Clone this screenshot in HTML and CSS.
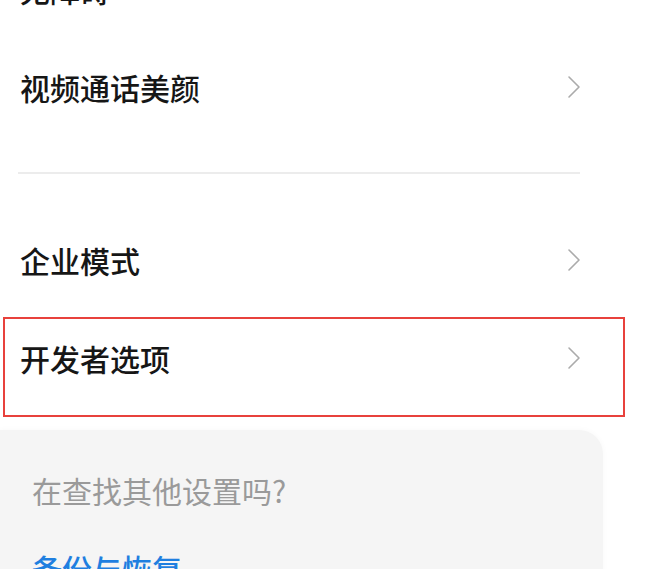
FILE: index.html
```html
<!DOCTYPE html>
<html lang="zh-CN">
<head>
    <meta charset="UTF-8">
    <meta name="viewport" content="width=device-width, initial-scale=1.0">
    <title>设置</title>
    <link rel="stylesheet" href="styles.css">
</head>
<body>
    <section class="settings-group first-group">
        <a class="setting-row" href="#">
            <span class="row-title">无障碍</span>
            <svg class="chevron" viewBox="0 0 14 24"><polyline points="2,2 12,12 2,22"/></svg>
        </a>
        <a class="setting-row" href="#">
            <span class="row-title">视频通话美颜</span>
            <svg class="chevron" viewBox="0 0 14 24"><polyline points="2,2 12,12 2,22"/></svg>
        </a>
    </section>

    <div class="divider"></div>

    <section class="settings-group">
        <a class="setting-row" href="#">
            <span class="row-title">企业模式</span>
            <svg class="chevron" viewBox="0 0 14 24"><polyline points="2,2 12,12 2,22"/></svg>
        </a>
        <a class="setting-row highlighted" href="#">
            <span class="row-title">开发者选项</span>
            <svg class="chevron" viewBox="0 0 14 24"><polyline points="2,2 12,12 2,22"/></svg>
            <span class="mark-box"></span>
        </a>
    </section>

    <section class="suggest-card">
        <p class="suggest-title">在查找其他设置吗?</p>
        <a class="suggest-link" href="#">备份与恢复</a>
    </section>
</body>
</html>
```

FILE: styles.css
```css
* {
    margin: 0;
    padding: 0;
    box-sizing: border-box;
    font-family: 'Noto Sans CJK SC', 'Noto Sans', sans-serif;
}

a {
    text-decoration: none;
}

body {
    background-color: #fff;
    width: 652px;
    height: 569px;
    overflow: hidden;
}


/* settings rows */

.first-group {
    margin-top: -60px;
}

.setting-row {
    position: relative;
    display: flex;
    align-items: center;
    justify-content: space-between;
    height: 98px;
    padding: 0 72px 0 20px;
}

.row-title {
    font-size: 30px;
    font-weight: 500;
    color: #161616;
    line-height: 40px;
}

.chevron {
    width: 14px;
    height: 24px;
    margin-right: -1px;
}

.chevron polyline {
    fill: none;
    stroke: #ababab;
    stroke-width: 1.6;
    stroke-linecap: round;
    stroke-linejoin: round;
}

.divider {
    height: 2px;
    background-color: #ececec;
    margin: 36px 72px 37px 18px;
}


/* red annotation box */

.mark-box {
    position: absolute;
    top: 8px;
    bottom: -10px;
    left: 3px;
    right: 27px;
    border: 2px solid #e8413c;
}


/* suggestion card */

.suggest-card {
    width: 603px;
    margin-top: 23px;
    background-color: #f5f5f5;
    border-top-right-radius: 24px;
    padding: 40px 0 0 32px;
    height: 160px;
    box-shadow: 0 0 6px rgba(0, 0, 0, .03);
}

.suggest-title {
    font-size: 30px;
    line-height: 40px;
    color: #9a9a9a;
}

.suggest-link {
    display: block;
    margin-top: 38px;
    font-size: 30px;
    line-height: 40px;
    font-weight: 500;
    color: #1f7fe0;
}
```
